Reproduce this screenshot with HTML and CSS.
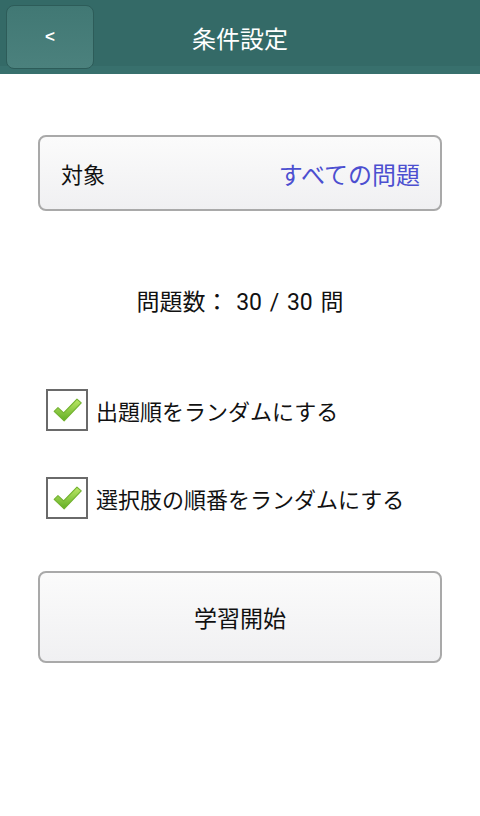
FILE: index.html
```html
<!DOCTYPE html>
<html lang="ja">
<head>
<meta charset="utf-8">
<link rel="stylesheet" href="styles.css">
</head>
<body>
<header class="appbar">
  <button class="back">&lt;</button>
  <h1 class="title">条件設定</h1>
</header>
<main class="content">
  <div class="target">
    <span class="target-label">対象</span>
    <span class="target-value">すべての問題</span>
  </div>
  <p class="count">問題数： 30 / 30 問</p>
  <label class="check-row">
    <span class="box"><svg viewBox="0 0 40 40" width="38" height="38"><defs><linearGradient id="g1" x1="0" y1="0" x2="0" y2="1"><stop offset="0" stop-color="#bde868"/><stop offset="1" stop-color="#62ae24"/></linearGradient></defs><path d="M6.5 21.5 L10.5 17.5 L16.5 23 L30.5 8.5 L35 12.5 L17 31.5 Z" fill="url(#g1)" stroke="#73b231" stroke-width="1.2" stroke-linejoin="round"/></svg></span>
    <span class="check-text">出題順をランダムにする</span>
  </label>
  <label class="check-row">
    <span class="box"><svg viewBox="0 0 40 40" width="38" height="38"><defs><linearGradient id="g2" x1="0" y1="0" x2="0" y2="1"><stop offset="0" stop-color="#bde868"/><stop offset="1" stop-color="#62ae24"/></linearGradient></defs><path d="M6.5 21.5 L10.5 17.5 L16.5 23 L30.5 8.5 L35 12.5 L17 31.5 Z" fill="url(#g2)" stroke="#73b231" stroke-width="1.2" stroke-linejoin="round"/></svg></span>
    <span class="check-text">選択肢の順番をランダムにする</span>
  </label>
  <button class="start">学習開始</button>
</main>
</body>
</html>
```
FILE: styles.css
```css
* { box-sizing: border-box; }
html, body { margin: 0; padding: 0; background: #fff; }
body {
  font-family: Roboto, "Noto Sans CJK JP", sans-serif;
  color: #111;
  width: 480px;
}
.appbar {
  position: relative;
  height: 74px;
  background: linear-gradient(to bottom, #346a67 0, #346a67 66px, #38706d 66px, #38706d 74px);
  display: flex;
  align-items: center;
  justify-content: center;
}
.back {
  position: absolute;
  left: 6px;
  top: 5px;
  width: 88px;
  height: 64px;
  border-radius: 8px;
  border: 1px solid #2d5c59;
  background: linear-gradient(to bottom, #417874, #4b817d);
  color: #fff;
  font-family: "Liberation Sans", sans-serif;
  font-size: 17px;
  font-weight: bold;
  padding: 0;
}
.title {
  margin: 0;
  color: #fff;
  font-size: 24px;
  font-weight: normal;
}
.content {
  padding: 61px 38px 0;
  display: flex;
  flex-direction: column;
}
.target {
  height: 76px;
  border: 2px solid #a9a9a9;
  border-radius: 8px;
  background: linear-gradient(to bottom, #fbfbfb, #f0f0f2);
  display: flex;
  align-items: center;
  justify-content: space-between;
  padding: 0 20px 0 21px;
  font-size: 22px;
}
.target-value { color: #4c4fd0; font-size: 24px; }
.count {
  margin: 76px 0 0;
  text-align: center;
  font-size: 23px;
  word-spacing: 2px;
  line-height: 32px;
}
.check-row {
  display: flex;
  align-items: center;
  gap: 8px;
  margin-left: 8px;
  font-size: 22px;
}
.check-row:first-of-type { margin-top: 70px; }
.check-row + .check-row { margin-top: 46px; }
.box {
  width: 42px;
  height: 42px;
  border: 2px solid #6a6a6a;
  background: #fff;
  display: flex;
  align-items: center;
  justify-content: center;
}
.start {
  margin-top: 52px;
  height: 92px;
  border: 2px solid #a9a9a9;
  border-radius: 8px;
  background: linear-gradient(to bottom, #fbfbfb, #f0f0f2);
  font-family: Roboto, "Noto Sans CJK JP", sans-serif;
  font-size: 23px;
  color: #111;
}
```
